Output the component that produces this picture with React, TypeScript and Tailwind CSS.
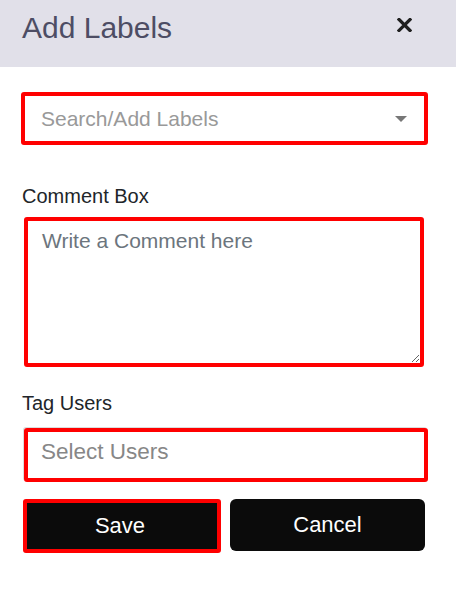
export default function App() {
  return (
    <div className="w-[456px] h-[591px] bg-white font-['Liberation_Sans',Arial,sans-serif]">
      <div className="h-[67px] bg-[#e1e0e9] flex justify-between items-start pt-[13px] pl-[22px] pr-[44px]">
        <h1 className="text-[30px] leading-[30px] text-[#4d4d64]">Add Labels</h1>
        <svg width="15" height="14" viewBox="0 0 15 14" className="mt-[5px]">
          <path d="M2 1.5 L13 12.5 M13 1.5 L2 12.5" stroke="#1f1f1f" strokeWidth="3.2" strokeLinecap="square" />
        </svg>
      </div>

      <div className="pt-[25px]">
        <div className="ml-[21px] w-[407px] h-[53px] border-4 border-[#ff0000] rounded-[3px] flex items-center justify-between pl-[16px] pr-[17px]">
          <span className="text-[21px] leading-[24px] text-[#999999]">Search/Add Labels</span>
          <svg width="12" height="6" viewBox="0 0 12 6">
            <path d="M0 0 H12 L6 6 Z" fill="#777777" />
          </svg>
        </div>

        <p className="mt-[41px] ml-[22px] text-[20px] leading-[20px] text-[#212529]">Comment Box</p>
        <textarea
          className="block mt-[11px] ml-[24px] w-[400px] h-[150px] border-4 border-[#ff0000] rounded-[3px] pt-[8px] pl-[14px] text-[21px] leading-[24px] text-[#212529] placeholder:text-[#6c757d] outline-none"
          placeholder="Write a Comment here"
        />

        <p className="mt-[26px] ml-[22px] text-[20px] leading-[20px] text-[#212529]">Tag Users</p>
        <div className="mt-[15px] ml-[24px] w-[404px] h-[54px] border-4 border-[#ff0000] rounded-[3px] shadow-[-1px_-1px_0_0_#dcdcdc] pt-[7px] pl-[13px]">
          <span className="text-[22.5px] leading-[26px] text-[#878787]">Select Users</span>
        </div>

        <div className="mt-[17px] flex items-start">
          <button className="ml-[23px] w-[198px] h-[54px] border-4 border-[#ff0000] rounded-[3px] bg-[#0b0b0b] text-white text-[22px] leading-[26px] flex items-center justify-center pr-[4px]">
            Save
          </button>
          <button className="ml-[9px] w-[195px] h-[52px] rounded-[6px] bg-[#0b0b0b] text-white text-[22px] leading-[26px] flex items-center justify-center">
            Cancel
          </button>
        </div>
      </div>
    </div>
  )
}
